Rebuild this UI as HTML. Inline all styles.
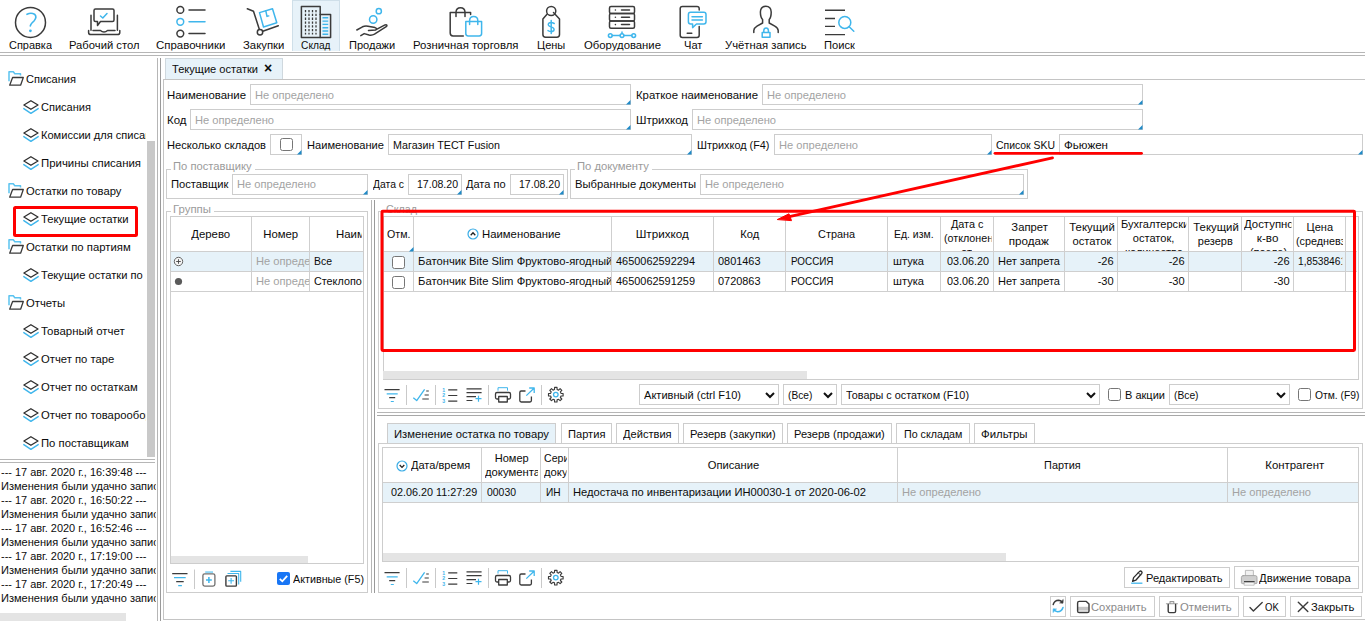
<!DOCTYPE html>
<html lang="ru"><head><meta charset="utf-8"><title>Текущие остатки</title>
<style>
html,body{margin:0;padding:0;background:#fff;overflow:hidden;}
body{width:1365px;height:621px;position:relative;overflow:hidden;font-family:"Liberation Sans", sans-serif;font-size:12px;color:#0c0c0c;}
body>div,body>span,body>svg{position:absolute;}
span{white-space:pre;display:block;}
svg{overflow:visible;}
</style></head>
<body>
<div style="left:292px;top:0px;width:48px;height:51px;background:#e7f2f9;border:1px solid #cfdfe9;box-sizing:border-box;border-bottom:none;"></div>
<span style="left:8.5px;top:38.57px;font-size:11.5px;line-height:13.5px;color:#0c0c0c;transform:scaleX(0.9529);transform-origin:0 0;clip-path:inset(0 0 1.5700000000000003px 0);">Справка</span>
<span style="left:68.5px;top:38.57px;font-size:11.5px;line-height:13.5px;color:#0c0c0c;transform:scaleX(0.9764);transform-origin:0 0;clip-path:inset(0 0 1.5700000000000003px 0);">Рабочий стол</span>
<span style="left:155.7px;top:38.57px;font-size:11.5px;line-height:13.5px;color:#0c0c0c;transform:scaleX(0.9947);transform-origin:0 0;clip-path:inset(0 0 1.5700000000000003px 0);">Справочники</span>
<span style="left:242.7px;top:38.57px;font-size:11.5px;line-height:13.5px;color:#0c0c0c;transform:scaleX(0.9848);transform-origin:0 0;clip-path:inset(0 0 1.5700000000000003px 0);">Закупки</span>
<span style="left:301px;top:38.57px;font-size:11.5px;line-height:13.5px;color:#0c0c0c;transform:scaleX(0.889);transform-origin:0 0;clip-path:inset(0 0 1.5700000000000003px 0);">Склад</span>
<span style="left:348.8px;top:38.57px;font-size:11.5px;line-height:13.5px;color:#0c0c0c;transform:scaleX(0.9619);transform-origin:0 0;clip-path:inset(0 0 1.5700000000000003px 0);">Продажи</span>
<span style="left:413px;top:38.57px;font-size:11.5px;line-height:13.5px;color:#0c0c0c;transform:scaleX(0.9887);transform-origin:0 0;clip-path:inset(0 0 1.5700000000000003px 0);">Розничная торговля</span>
<span style="left:537px;top:38.57px;font-size:11.5px;line-height:13.5px;color:#0c0c0c;transform:scaleX(0.9583);transform-origin:0 0;clip-path:inset(0 0 1.5700000000000003px 0);">Цены</span>
<span style="left:583.5px;top:38.57px;font-size:11.5px;line-height:13.5px;color:#0c0c0c;transform:scaleX(0.9844);transform-origin:0 0;clip-path:inset(0 0 1.5700000000000003px 0);">Оборудование</span>
<span style="left:684px;top:38.57px;font-size:11.5px;line-height:13.5px;color:#0c0c0c;transform:scaleX(0.9645);transform-origin:0 0;clip-path:inset(0 0 1.5700000000000003px 0);">Чат</span>
<span style="left:725.2px;top:38.57px;font-size:11.5px;line-height:13.5px;color:#0c0c0c;transform:scaleX(0.9807);transform-origin:0 0;clip-path:inset(0 0 1.5700000000000003px 0);">Учётная запись</span>
<span style="left:823.7px;top:38.57px;font-size:11.5px;line-height:13.5px;color:#0c0c0c;transform:scaleX(0.9694);transform-origin:0 0;clip-path:inset(0 0 1.5700000000000003px 0);">Поиск</span>
<div style="left:0px;top:51px;width:1365px;height:1px;background:#fff;"></div>
<div style="left:0px;top:52px;width:1365px;height:1px;background:#b6b6b6;"></div>
<div style="left:0px;top:55px;width:1365px;height:1px;background:#b6b6b6;"></div>
<span style="left:26.3px;top:72.77px;font-size:11.5px;line-height:13.5px;color:#0c0c0c;transform:scaleX(0.9595);transform-origin:0 0;width:124.75px;overflow:hidden;">Списания</span>
<span style="left:41.2px;top:100.77px;font-size:11.5px;line-height:13.5px;color:#0c0c0c;transform:scaleX(0.9595);transform-origin:0 0;width:109.22px;overflow:hidden;">Списания</span>
<span style="left:41.2px;top:128.77px;font-size:11.5px;line-height:13.5px;color:#0c0c0c;transform:scaleX(0.9618);transform-origin:0 0;width:108.96px;overflow:hidden;">Комиссии для списания</span>
<span style="left:41.2px;top:156.77px;font-size:11.5px;line-height:13.5px;color:#0c0c0c;transform:scaleX(0.9913);transform-origin:0 0;width:105.72px;overflow:hidden;">Причины списания</span>
<span style="left:26.3px;top:184.77px;font-size:11.5px;line-height:13.5px;color:#0c0c0c;transform:scaleX(0.9771);transform-origin:0 0;width:122.51px;overflow:hidden;">Остатки по товару</span>
<span style="left:41.2px;top:212.77px;font-size:11.5px;line-height:13.5px;color:#0c0c0c;transform:scaleX(0.9808);transform-origin:0 0;width:106.85px;overflow:hidden;">Текущие остатки</span>
<span style="left:26.3px;top:240.77px;font-size:11.5px;line-height:13.5px;color:#0c0c0c;transform:scaleX(0.9848);transform-origin:0 0;width:121.55px;overflow:hidden;">Остатки по партиям</span>
<span style="left:41.2px;top:268.77px;font-size:11.5px;line-height:13.5px;color:#0c0c0c;transform:scaleX(0.9678);transform-origin:0 0;width:108.29px;overflow:hidden;">Текущие остатки по партиям</span>
<span style="left:26.3px;top:296.77px;font-size:11.5px;line-height:13.5px;color:#0c0c0c;transform:scaleX(0.9807);transform-origin:0 0;width:122.06px;overflow:hidden;">Отчеты</span>
<span style="left:41.2px;top:324.77px;font-size:11.5px;line-height:13.5px;color:#0c0c0c;transform:scaleX(0.995);transform-origin:0 0;width:105.33px;overflow:hidden;">Товарный отчет</span>
<span style="left:41.2px;top:352.77px;font-size:11.5px;line-height:13.5px;color:#0c0c0c;transform:scaleX(0.9782);transform-origin:0 0;width:107.14px;overflow:hidden;">Отчет по таре</span>
<span style="left:41.2px;top:380.77px;font-size:11.5px;line-height:13.5px;color:#0c0c0c;transform:scaleX(0.9789);transform-origin:0 0;width:107.06px;overflow:hidden;">Отчет по остаткам</span>
<span style="left:41.2px;top:408.77px;font-size:11.5px;line-height:13.5px;color:#0c0c0c;transform:scaleX(0.9795);transform-origin:0 0;width:106.99px;overflow:hidden;">Отчет по товарообороту</span>
<span style="left:41.2px;top:436.77px;font-size:11.5px;line-height:13.5px;color:#0c0c0c;transform:scaleX(0.9814);transform-origin:0 0;width:106.79px;overflow:hidden;">По поставщикам</span>
<div style="left:147px;top:141px;width:8px;height:316px;background:#c9c9c9;"></div>
<div style="left:0px;top:459px;width:155px;height:1px;background:#b6b6b6;"></div>
<div style="left:0px;top:462px;width:155px;height:1px;background:#b6b6b6;"></div>
<div style="left:157px;top:58px;width:1px;height:563px;background:#b6b6b6;"></div>
<div style="left:160px;top:58px;width:1px;height:563px;background:#9a9a9a;"></div>
<span style="left:0.5px;top:465.57px;font-size:11.5px;line-height:13.5px;color:#0c0c0c;transform:scaleX(0.9512);transform-origin:0 0;width:162.43px;overflow:hidden;">--- 17 авг. 2020 г., 16:39:48 ---</span>
<span style="left:0.5px;top:479.57px;font-size:11.5px;line-height:13.5px;color:#0c0c0c;transform:scaleX(0.9611);transform-origin:0 0;width:160.75px;overflow:hidden;">Изменения были удачно записаны</span>
<span style="left:0.5px;top:493.57px;font-size:11.5px;line-height:13.5px;color:#0c0c0c;transform:scaleX(0.9512);transform-origin:0 0;width:162.43px;overflow:hidden;">--- 17 авг. 2020 г., 16:50:22 ---</span>
<span style="left:0.5px;top:507.57px;font-size:11.5px;line-height:13.5px;color:#0c0c0c;transform:scaleX(0.9611);transform-origin:0 0;width:160.75px;overflow:hidden;">Изменения были удачно записаны</span>
<span style="left:0.5px;top:521.57px;font-size:11.5px;line-height:13.5px;color:#0c0c0c;transform:scaleX(0.9512);transform-origin:0 0;width:162.43px;overflow:hidden;">--- 17 авг. 2020 г., 16:52:46 ---</span>
<span style="left:0.5px;top:535.57px;font-size:11.5px;line-height:13.5px;color:#0c0c0c;transform:scaleX(0.9611);transform-origin:0 0;width:160.75px;overflow:hidden;">Изменения были удачно записаны</span>
<span style="left:0.5px;top:549.57px;font-size:11.5px;line-height:13.5px;color:#0c0c0c;transform:scaleX(0.9512);transform-origin:0 0;width:162.43px;overflow:hidden;">--- 17 авг. 2020 г., 17:19:00 ---</span>
<span style="left:0.5px;top:563.57px;font-size:11.5px;line-height:13.5px;color:#0c0c0c;transform:scaleX(0.9611);transform-origin:0 0;width:160.75px;overflow:hidden;">Изменения были удачно записаны</span>
<span style="left:0.5px;top:577.57px;font-size:11.5px;line-height:13.5px;color:#0c0c0c;transform:scaleX(0.9512);transform-origin:0 0;width:162.43px;overflow:hidden;">--- 17 авг. 2020 г., 17:20:49 ---</span>
<span style="left:0.5px;top:591.57px;font-size:11.5px;line-height:13.5px;color:#0c0c0c;transform:scaleX(0.9611);transform-origin:0 0;width:160.75px;overflow:hidden;">Изменения были удачно записаны</span>
<div style="left:0px;top:613px;width:126px;height:8px;background:#e4e4e4;"></div>
<div style="left:13px;top:206px;width:125px;height:31px;border:3px solid #ff0000;border-radius:2.5px;box-sizing:border-box;"></div>
<div style="left:165px;top:58px;width:118px;height:22px;background:#e7f2f9;border:1px solid #cfd8de;box-sizing:border-box;"></div>
<span style="left:172px;top:62.57px;font-size:11.5px;line-height:13.5px;color:#0c0c0c;transform:scaleX(0.9629);transform-origin:0 0;">Текущие остатки</span>
<span style="left:264px;top:60.45px;font-size:14px;line-height:16px;color:#0c0c0c;font-weight:700;">×</span>
<div style="left:163px;top:79px;width:1202px;height:541px;border:1px solid #c4c4c4;box-sizing:border-box;border-right:none;"></div>
<span style="left:167px;top:88.57px;font-size:11.5px;line-height:13.5px;color:#0c0c0c;transform:scaleX(0.9908);transform-origin:0 0;">Наименование</span>
<div style="left:250px;top:84px;width:381px;height:21px;background:#fff;border:1px solid #cdcdcd;box-sizing:border-box;"></div>
<svg style="left:625.5px;top:99.5px" width="4.5" height="4.5"><path d="M4.5 0V4.5H0Z" fill="#1f8ac8"/></svg>
<span style="left:255px;top:88.57px;font-size:11.5px;line-height:13.5px;color:#a3a3a3;transform:scaleX(0.9677);transform-origin:0 0;">Не определено</span>
<span style="left:635.6px;top:88.57px;font-size:11.5px;line-height:13.5px;color:#0c0c0c;transform:scaleX(0.9885);transform-origin:0 0;">Краткое наименование</span>
<div style="left:762px;top:84px;width:381px;height:21px;background:#fff;border:1px solid #cdcdcd;box-sizing:border-box;"></div>
<svg style="left:1137.5px;top:99.5px" width="4.5" height="4.5"><path d="M4.5 0V4.5H0Z" fill="#1f8ac8"/></svg>
<span style="left:767px;top:88.57px;font-size:11.5px;line-height:13.5px;color:#a3a3a3;transform:scaleX(0.9677);transform-origin:0 0;">Не определено</span>
<span style="left:167px;top:113.57px;font-size:11.5px;line-height:13.5px;color:#0c0c0c;transform:scaleX(0.9968);transform-origin:0 0;">Код</span>
<div style="left:190px;top:109px;width:441px;height:21px;background:#fff;border:1px solid #cdcdcd;box-sizing:border-box;"></div>
<svg style="left:625.5px;top:124.5px" width="4.5" height="4.5"><path d="M4.5 0V4.5H0Z" fill="#1f8ac8"/></svg>
<span style="left:195px;top:113.57px;font-size:11.5px;line-height:13.5px;color:#a3a3a3;transform:scaleX(0.9677);transform-origin:0 0;">Не определено</span>
<span style="left:635.6px;top:113.57px;font-size:11.5px;line-height:13.5px;color:#0c0c0c;transform:scaleX(0.9925);transform-origin:0 0;">Штрихкод</span>
<div style="left:692px;top:109px;width:451px;height:21px;background:#fff;border:1px solid #cdcdcd;box-sizing:border-box;"></div>
<svg style="left:1137.5px;top:124.5px" width="4.5" height="4.5"><path d="M4.5 0V4.5H0Z" fill="#1f8ac8"/></svg>
<span style="left:697px;top:113.57px;font-size:11.5px;line-height:13.5px;color:#a3a3a3;transform:scaleX(0.9677);transform-origin:0 0;">Не определено</span>
<span style="left:167px;top:138.57px;font-size:11.5px;line-height:13.5px;color:#0c0c0c;transform:scaleX(0.9663);transform-origin:0 0;">Несколько складов</span>
<div style="left:270px;top:134px;width:32px;height:21px;background:#fff;border:1px solid #cdcdcd;box-sizing:border-box;"></div>
<svg style="left:296.5px;top:149.5px" width="4.5" height="4.5"><path d="M4.5 0V4.5H0Z" fill="#1f8ac8"/></svg>
<div style="left:280px;top:138px;width:13px;height:13px;background:#fff;border:1px solid #767676;box-sizing:border-box;border-radius:2.5px;"></div>
<span style="left:307px;top:138.57px;font-size:11.5px;line-height:13.5px;color:#0c0c0c;transform:scaleX(0.9657);transform-origin:0 0;">Наименование</span>
<div style="left:388px;top:134px;width:304px;height:21px;background:#fff;border:1px solid #cdcdcd;box-sizing:border-box;"></div>
<svg style="left:686.5px;top:149.5px" width="4.5" height="4.5"><path d="M4.5 0V4.5H0Z" fill="#1f8ac8"/></svg>
<span style="left:393px;top:138.57px;font-size:11.5px;line-height:13.5px;color:#0c0c0c;transform:scaleX(0.9311);transform-origin:0 0;">Магазин ТЕСТ Fusion</span>
<span style="left:696.8px;top:138.57px;font-size:11.5px;line-height:13.5px;color:#0c0c0c;transform:scaleX(0.9456);transform-origin:0 0;">Штрихкод (F4)</span>
<div style="left:774px;top:134px;width:218px;height:21px;background:#fff;border:1px solid #cdcdcd;box-sizing:border-box;"></div>
<svg style="left:986.5px;top:149.5px" width="4.5" height="4.5"><path d="M4.5 0V4.5H0Z" fill="#1f8ac8"/></svg>
<span style="left:779px;top:138.57px;font-size:11.5px;line-height:13.5px;color:#a3a3a3;transform:scaleX(0.9677);transform-origin:0 0;">Не определено</span>
<span style="left:995.5px;top:138.57px;font-size:11.5px;line-height:13.5px;color:#0c0c0c;transform:scaleX(0.9062);transform-origin:0 0;">Список SKU</span>
<div style="left:1059px;top:134px;width:304px;height:21px;background:#fff;border:1px solid #cdcdcd;box-sizing:border-box;"></div>
<svg style="left:1357.5px;top:149.5px" width="4.5" height="4.5"><path d="M4.5 0V4.5H0Z" fill="#1f8ac8"/></svg>
<span style="left:1064px;top:138.57px;font-size:11.5px;line-height:13.5px;color:#0c0c0c;transform:scaleX(1.0075);transform-origin:0 0;">Фьюжен</span>
<div style="left:166px;top:169px;width:402px;height:30px;border:1px solid #cdcdcd;box-sizing:border-box;"></div>
<div style="left:171px;top:169px;width:83.5px;height:1px;background:#fff;"></div>
<span style="left:173px;top:160.37px;font-size:11.5px;line-height:13.5px;color:#9b9b9b;transform:scaleX(0.9731);transform-origin:0 0;">По поставщику</span>
<span style="left:170.6px;top:177.57px;font-size:11.5px;line-height:13.5px;color:#0c0c0c;transform:scaleX(0.9731);transform-origin:0 0;">Поставщик</span>
<div style="left:232px;top:174px;width:136px;height:21px;background:#fff;border:1px solid #cdcdcd;box-sizing:border-box;"></div>
<svg style="left:362.5px;top:189.5px" width="4.5" height="4.5"><path d="M4.5 0V4.5H0Z" fill="#1f8ac8"/></svg>
<span style="left:237px;top:177.57px;font-size:11.5px;line-height:13.5px;color:#a3a3a3;transform:scaleX(0.9677);transform-origin:0 0;">Не определено</span>
<span style="left:373px;top:177.57px;font-size:11.5px;line-height:13.5px;color:#0c0c0c;transform:scaleX(0.9006);transform-origin:0 0;">Дата с</span>
<div style="left:408px;top:174px;width:54px;height:21px;background:#fff;border:1px solid #cdcdcd;box-sizing:border-box;"></div>
<svg style="left:456.5px;top:189.5px" width="4.5" height="4.5"><path d="M4.5 0V4.5H0Z" fill="#1f8ac8"/></svg>
<span style="left:417.3px;top:177.57px;font-size:11.5px;line-height:13.5px;color:#0c0c0c;transform:scaleX(0.9159);transform-origin:0 0;">17.08.20</span>
<span style="left:466.4px;top:177.57px;font-size:11.5px;line-height:13.5px;color:#0c0c0c;transform:scaleX(0.9589);transform-origin:0 0;">Дата по</span>
<div style="left:510px;top:174px;width:54px;height:21px;background:#fff;border:1px solid #cdcdcd;box-sizing:border-box;"></div>
<svg style="left:558.5px;top:189.5px" width="4.5" height="4.5"><path d="M4.5 0V4.5H0Z" fill="#1f8ac8"/></svg>
<span style="left:518.7px;top:177.57px;font-size:11.5px;line-height:13.5px;color:#0c0c0c;transform:scaleX(0.9159);transform-origin:0 0;">17.08.20</span>
<div style="left:570px;top:169px;width:458px;height:30px;border:1px solid #cdcdcd;box-sizing:border-box;"></div>
<div style="left:575px;top:169px;width:77px;height:1px;background:#fff;"></div>
<span style="left:577px;top:160.37px;font-size:11.5px;line-height:13.5px;color:#9b9b9b;transform:scaleX(0.979);transform-origin:0 0;">По документу</span>
<span style="left:574.5px;top:177.57px;font-size:11.5px;line-height:13.5px;color:#0c0c0c;transform:scaleX(0.9762);transform-origin:0 0;">Выбранные документы</span>
<div style="left:700px;top:174px;width:324px;height:21px;background:#fff;border:1px solid #cdcdcd;box-sizing:border-box;"></div>
<svg style="left:1018.5px;top:189.5px" width="4.5" height="4.5"><path d="M4.5 0V4.5H0Z" fill="#1f8ac8"/></svg>
<span style="left:705px;top:177.57px;font-size:11.5px;line-height:13.5px;color:#a3a3a3;transform:scaleX(0.9677);transform-origin:0 0;">Не определено</span>
<div style="left:371px;top:200px;width:1px;height:393px;background:#b6b6b6;"></div>
<div style="left:374px;top:200px;width:1px;height:393px;background:#9a9a9a;"></div>
<div style="left:166px;top:211px;width:202px;height:382px;border:1px solid #cdcdcd;box-sizing:border-box;"></div>
<div style="left:171px;top:211px;width:43px;height:1px;background:#fff;"></div>
<span style="left:173px;top:203.37px;font-size:11.5px;line-height:13.5px;color:#9b9b9b;transform:scaleX(0.9914);transform-origin:0 0;">Группы</span>
<div style="left:170px;top:216px;width:194px;height:348px;background:#fff;border:1px solid #cdcdcd;box-sizing:border-box;"></div>
<div style="left:171px;top:252px;width:192px;height:19px;background:#e6f2f9;"></div>
<div style="left:171px;top:251px;width:192px;height:1px;background:#cfcfcf;"></div>
<div style="left:171px;top:271px;width:192px;height:1px;background:#cfcfcf;"></div>
<div style="left:171px;top:291px;width:192px;height:1px;background:#cfcfcf;"></div>
<div style="left:251px;top:217px;width:1px;height:75px;background:#cfcfcf;"></div>
<div style="left:309px;top:217px;width:1px;height:75px;background:#cfcfcf;"></div>
<span style="left:190.82px;top:227.57px;font-size:11.5px;line-height:13.5px;color:#0c0c0c;transform:scaleX(0.9909);transform-origin:50% 0;">Дерево</span>
<span style="left:262.8px;top:227.57px;font-size:11.5px;line-height:13.5px;color:#0c0c0c;transform:scaleX(0.9885);transform-origin:50% 0;">Номер</span>
<span style="left:336.3px;top:227.57px;font-size:11.5px;line-height:13.5px;color:#0c0c0c;transform:scaleX(0.9908);transform-origin:0 0;width:26.24px;overflow:hidden;">Наименование</span>
<span style="left:256px;top:254.57px;font-size:11.5px;line-height:13.5px;color:#a3a3a3;transform:scaleX(0.9677);transform-origin:0 0;width:54.77px;overflow:hidden;">Не определено</span>
<span style="left:256px;top:274.57px;font-size:11.5px;line-height:13.5px;color:#a3a3a3;transform:scaleX(0.9677);transform-origin:0 0;width:54.77px;overflow:hidden;">Не определено</span>
<span style="left:314px;top:254.57px;font-size:11.5px;line-height:13.5px;color:#0c0c0c;transform:scaleX(0.9078);transform-origin:0 0;">Все</span>
<span style="left:314.3px;top:274.57px;font-size:11.5px;line-height:13.5px;color:#0c0c0c;transform:scaleX(0.9388);transform-origin:0 0;width:51.13px;overflow:hidden;">Стеклопосуда</span>
<svg style="left:173px;top:256px" width="11" height="11" viewBox="0 0 11 11"><circle cx="5.5" cy="5.5" r="4.2" fill="#f4f4f4" stroke="#555" stroke-width="0.9"/><path d="M3.2 5.5H7.8M5.5 3.2V7.8" stroke="#444" stroke-width="0.9"/></svg>
<svg style="left:174px;top:277px" width="9" height="9" viewBox="0 0 9 9"><circle cx="4.5" cy="4.5" r="3.6" fill="#5a5a5a"/></svg>
<div style="left:171px;top:556px;width:137px;height:7px;background:#e4e4e4;"></div>
<svg style="left:277px;top:572px" width="13" height="13" viewBox="0 0 13 13"><rect x="0" y="0" width="13" height="13" rx="2" fill="#1976f5"/><path d="M2.8 6.8L5.3 9.3L10.2 3.8" fill="none" stroke="#fff" stroke-width="1.8"/></svg>
<span style="left:293px;top:572.57px;font-size:11.5px;line-height:13.5px;color:#0c0c0c;transform:scaleX(0.9352);transform-origin:0 0;">Активные (F5)</span>
<div style="left:378px;top:211px;width:985px;height:198px;border:1px solid #cdcdcd;box-sizing:border-box;"></div>
<div style="left:383.5px;top:211px;width:36px;height:1px;background:#fff;"></div>
<span style="left:385.5px;top:203.37px;font-size:11.5px;line-height:13.5px;color:#9b9b9b;transform:scaleX(0.931);transform-origin:0 0;">Склад</span>
<div style="left:383px;top:216px;width:976px;height:164px;background:#fff;border:1px solid #cdcdcd;box-sizing:border-box;"></div>
<div style="left:384px;top:252px;width:973px;height:19px;background:#e6f2f9;"></div>
<div style="left:384px;top:251px;width:973px;height:1px;background:#cfcfcf;"></div>
<div style="left:384px;top:271px;width:973px;height:1px;background:#cfcfcf;"></div>
<div style="left:384px;top:291px;width:973px;height:1px;background:#cfcfcf;"></div>
<div style="left:413px;top:217px;width:1px;height:75px;background:#cfcfcf;"></div>
<div style="left:611px;top:217px;width:1px;height:75px;background:#cfcfcf;"></div>
<div style="left:713px;top:217px;width:1px;height:75px;background:#cfcfcf;"></div>
<div style="left:785px;top:217px;width:1px;height:75px;background:#cfcfcf;"></div>
<div style="left:887px;top:217px;width:1px;height:75px;background:#cfcfcf;"></div>
<div style="left:940px;top:217px;width:1px;height:75px;background:#cfcfcf;"></div>
<div style="left:993px;top:217px;width:1px;height:75px;background:#cfcfcf;"></div>
<div style="left:1064px;top:217px;width:1px;height:75px;background:#cfcfcf;"></div>
<div style="left:1117px;top:217px;width:1px;height:75px;background:#cfcfcf;"></div>
<div style="left:1188px;top:217px;width:1px;height:75px;background:#cfcfcf;"></div>
<div style="left:1241px;top:217px;width:1px;height:75px;background:#cfcfcf;"></div>
<div style="left:1293px;top:217px;width:1px;height:75px;background:#cfcfcf;"></div>
<div style="left:1345px;top:217px;width:1px;height:75px;background:#cfcfcf;"></div>
<svg style="left:408.5px;top:246.5px" width="4.5" height="4.5"><path d="M4.5 0V4.5H0Z" fill="#1f8ac8"/></svg>
<span style="left:386.8px;top:227.57px;font-size:11.5px;line-height:13.5px;color:#0c0c0c;transform:scaleX(0.9239);transform-origin:0 0;">Отм.</span>
<span style="left:481.6px;top:227.57px;font-size:11.5px;line-height:13.5px;color:#0c0c0c;transform:scaleX(0.9858);transform-origin:0 0;">Наименование</span>
<span style="left:636.3px;top:227.57px;font-size:11.5px;line-height:13.5px;color:#0c0c0c;transform:scaleX(1.0116);transform-origin:50% 0;">Штрихкод</span>
<span style="left:740.22px;top:227.57px;font-size:11.5px;line-height:13.5px;color:#0c0c0c;transform:scaleX(0.9712);transform-origin:50% 0;">Код</span>
<span style="left:816.94px;top:227.57px;font-size:11.5px;line-height:13.5px;color:#0c0c0c;transform:scaleX(0.9457);transform-origin:50% 0;">Страна</span>
<span style="left:892.21px;top:227.57px;font-size:11.5px;line-height:13.5px;color:#0c0c0c;transform:scaleX(0.9064);transform-origin:50% 0;">Ед. изм.</span>
<span style="left:949.79px;top:217.57px;font-size:11.5px;line-height:13.5px;color:#0c0c0c;transform:scaleX(0.9442);transform-origin:50% 0;">Дата с</span>
<span style="left:943.7px;top:231.57px;font-size:11.5px;line-height:13.5px;color:#0c0c0c;transform:scaleX(0.9304);transform-origin:0 0;width:50.84px;overflow:hidden;">(отклонение</span>
<span style="left:961px;top:245.57px;font-size:11.5px;line-height:13.5px;color:#0c0c0c;transform:scaleX(0.9631);transform-origin:0 0;clip-path:inset(0 0 8.069999999999993px 0);">от</span>
<span style="left:1010.88px;top:220.57px;font-size:11.5px;line-height:13.5px;color:#0c0c0c;transform:scaleX(0.9799);transform-origin:50% 0;">Запрет</span>
<span style="left:1009.21px;top:234.57px;font-size:11.5px;line-height:13.5px;color:#0c0c0c;transform:scaleX(1.0107);transform-origin:50% 0;">продаж</span>
<span style="left:1068.5px;top:220.57px;font-size:11.5px;line-height:13.5px;color:#0c0c0c;transform:scaleX(0.9891);transform-origin:50% 0;">Текущий</span>
<span style="left:1071.5px;top:234.57px;font-size:11.5px;line-height:13.5px;color:#0c0c0c;transform:scaleX(0.975);transform-origin:50% 0;">остаток</span>
<span style="left:1120.7px;top:217.57px;font-size:11.5px;line-height:13.5px;color:#0c0c0c;transform:scaleX(0.9599);transform-origin:0 0;width:67.82px;overflow:hidden;">Бухгалтерский</span>
<span style="left:1131.91px;top:231.57px;font-size:11.5px;line-height:13.5px;color:#0c0c0c;transform:scaleX(0.9609);transform-origin:50% 0;">остаток,</span>
<span style="left:1124.5px;top:245.57px;font-size:11.5px;line-height:13.5px;color:#0c0c0c;transform:scaleX(0.9632);transform-origin:0 0;clip-path:inset(0 0 8.069999999999993px 0);">количество</span>
<span style="left:1192.5px;top:220.57px;font-size:11.5px;line-height:13.5px;color:#0c0c0c;transform:scaleX(0.9891);transform-origin:50% 0;">Текущий</span>
<span style="left:1197.2px;top:234.57px;font-size:11.5px;line-height:13.5px;color:#0c0c0c;transform:scaleX(0.9564);transform-origin:50% 0;">резерв</span>
<span style="left:1244px;top:217.57px;font-size:11.5px;line-height:13.5px;color:#0c0c0c;transform:scaleX(0.9895);transform-origin:0 0;width:47.8px;overflow:hidden;">Доступное</span>
<span style="left:1257.38px;top:231.57px;font-size:11.5px;line-height:13.5px;color:#0c0c0c;transform:scaleX(1.0118);transform-origin:50% 0;">к-во</span>
<span style="left:1250px;top:245.57px;font-size:11.5px;line-height:13.5px;color:#0c0c0c;transform:scaleX(0.9453);transform-origin:0 0;clip-path:inset(0 0 8.069999999999993px 0);">(после)</span>
<span style="left:1305.67px;top:220.57px;font-size:11.5px;line-height:13.5px;color:#0c0c0c;transform:scaleX(0.9582);transform-origin:50% 0;">Цена</span>
<span style="left:1296.1px;top:234.57px;font-size:11.5px;line-height:13.5px;color:#0c0c0c;transform:scaleX(0.9365);transform-origin:0 0;width:50.08px;overflow:hidden;">(средневзвешенная)</span>
<div style="left:392px;top:256px;width:13px;height:13px;box-sizing:border-box;border:1px solid #767676;border-radius:2.5px;background:#fff"></div>
<span style="left:418.2px;top:254.57px;font-size:11.5px;line-height:13.5px;color:#0c0c0c;transform:scaleX(0.9786);transform-origin:0 0;width:197.02px;overflow:hidden;">Батончик Bite Slim Фруктово-ягодный 30г</span>
<span style="left:616px;top:254.57px;font-size:11.5px;line-height:13.5px;color:#0c0c0c;transform:scaleX(0.95);transform-origin:0 0;">4650062592294</span>
<span style="left:718px;top:254.57px;font-size:11.5px;line-height:13.5px;color:#0c0c0c;transform:scaleX(0.9491);transform-origin:0 0;">0801463</span>
<span style="left:790.5px;top:254.57px;font-size:11.5px;line-height:13.5px;color:#0c0c0c;transform:scaleX(0.8578);transform-origin:0 0;">РОССИЯ</span>
<span style="left:892.5px;top:254.57px;font-size:11.5px;line-height:13.5px;color:#0c0c0c;transform:scaleX(0.9669);transform-origin:0 0;">штука</span>
<span style="left:947.3px;top:254.57px;font-size:11.5px;line-height:13.5px;color:#0c0c0c;transform:scaleX(0.9382);transform-origin:0 0;">03.06.20</span>
<span style="left:998px;top:254.57px;font-size:11.5px;line-height:13.5px;color:#0c0c0c;transform:scaleX(0.9594);transform-origin:0 0;">Нет запрета</span>
<span style="left:1096.97px;top:254.57px;font-size:11.5px;line-height:13.5px;color:#0c0c0c;transform:scaleX(0.9624);transform-origin:100% 0;">-26</span>
<span style="left:1167.58px;top:254.57px;font-size:11.5px;line-height:13.5px;color:#0c0c0c;transform:scaleX(0.9624);transform-origin:100% 0;">-26</span>
<span style="left:1272.78px;top:254.57px;font-size:11.5px;line-height:13.5px;color:#0c0c0c;transform:scaleX(0.9624);transform-origin:100% 0;">-26</span>
<span style="left:1298.4px;top:254.57px;font-size:11.5px;line-height:13.5px;color:#0c0c0c;transform:scaleX(0.8845);transform-origin:0 0;width:50.42px;overflow:hidden;">1,853846153</span>
<div style="left:392px;top:276px;width:13px;height:13px;box-sizing:border-box;border:1px solid #767676;border-radius:2.5px;background:#fff"></div>
<span style="left:418.2px;top:274.57px;font-size:11.5px;line-height:13.5px;color:#0c0c0c;transform:scaleX(0.9786);transform-origin:0 0;width:197.02px;overflow:hidden;">Батончик Bite Slim Фруктово-ягодный 30г</span>
<span style="left:616px;top:274.57px;font-size:11.5px;line-height:13.5px;color:#0c0c0c;transform:scaleX(0.95);transform-origin:0 0;">4650062591259</span>
<span style="left:718px;top:274.57px;font-size:11.5px;line-height:13.5px;color:#0c0c0c;transform:scaleX(0.9491);transform-origin:0 0;">0720863</span>
<span style="left:790.5px;top:274.57px;font-size:11.5px;line-height:13.5px;color:#0c0c0c;transform:scaleX(0.8578);transform-origin:0 0;">РОССИЯ</span>
<span style="left:892.5px;top:274.57px;font-size:11.5px;line-height:13.5px;color:#0c0c0c;transform:scaleX(0.9669);transform-origin:0 0;">штука</span>
<span style="left:947.3px;top:274.57px;font-size:11.5px;line-height:13.5px;color:#0c0c0c;transform:scaleX(0.9382);transform-origin:0 0;">03.06.20</span>
<span style="left:998px;top:274.57px;font-size:11.5px;line-height:13.5px;color:#0c0c0c;transform:scaleX(0.9594);transform-origin:0 0;">Нет запрета</span>
<span style="left:1096.97px;top:274.57px;font-size:11.5px;line-height:13.5px;color:#0c0c0c;transform:scaleX(0.9624);transform-origin:100% 0;">-30</span>
<span style="left:1167.58px;top:274.57px;font-size:11.5px;line-height:13.5px;color:#0c0c0c;transform:scaleX(0.9624);transform-origin:100% 0;">-30</span>
<span style="left:1272.78px;top:274.57px;font-size:11.5px;line-height:13.5px;color:#0c0c0c;transform:scaleX(0.9624);transform-origin:100% 0;">-30</span>
<svg style="left:466.9px;top:228.2px" width="12" height="12" viewBox="0 0 12 12"><circle cx="6" cy="6" r="5" fill="none" stroke="#39ace6" stroke-width="1.2"/><path d="M3.7 7.2L6 4.8L8.3 7.2" fill="none" stroke="#222" stroke-width="1.3"/></svg>
<div style="left:383px;top:371px;width:424px;height:8px;background:#e4e4e4;"></div>
<div style="left:639px;top:384px;width:140px;height:21px;background:#fff;border:1px solid #cdcdcd;box-sizing:border-box;"></div>
<span style="left:644px;top:388.57px;font-size:11.5px;line-height:13.5px;color:#0c0c0c;transform:scaleX(0.9616);transform-origin:0 0;">Активный (ctrl F10)</span>
<svg style="left:764.5px;top:391.5px" width="10" height="7" viewBox="0 0 10 7"><path d="M1 1L5 5L9 1" fill="none" stroke="#111" stroke-width="2"/></svg>
<div style="left:783px;top:384px;width:54px;height:21px;background:#fff;border:1px solid #cdcdcd;box-sizing:border-box;"></div>
<span style="left:788px;top:388.57px;font-size:11.5px;line-height:13.5px;color:#0c0c0c;transform:scaleX(0.8841);transform-origin:0 0;">(Все)</span>
<svg style="left:822.5px;top:391.5px" width="10" height="7" viewBox="0 0 10 7"><path d="M1 1L5 5L9 1" fill="none" stroke="#111" stroke-width="2"/></svg>
<div style="left:841px;top:384px;width:259px;height:21px;background:#fff;border:1px solid #cdcdcd;box-sizing:border-box;"></div>
<span style="left:846px;top:388.57px;font-size:11.5px;line-height:13.5px;color:#0c0c0c;transform:scaleX(0.9423);transform-origin:0 0;">Товары с остатком (F10)</span>
<svg style="left:1085.5px;top:391.5px" width="10" height="7" viewBox="0 0 10 7"><path d="M1 1L5 5L9 1" fill="none" stroke="#111" stroke-width="2"/></svg>
<div style="left:1108px;top:388px;width:13px;height:13px;box-sizing:border-box;border:1px solid #767676;border-radius:2.5px;background:#fff"></div>
<span style="left:1124.8px;top:388.57px;font-size:11.5px;line-height:13.5px;color:#0c0c0c;transform:scaleX(0.9584);transform-origin:0 0;">В акции</span>
<div style="left:1169px;top:384px;width:121px;height:21px;background:#fff;border:1px solid #cdcdcd;box-sizing:border-box;"></div>
<span style="left:1174px;top:388.57px;font-size:11.5px;line-height:13.5px;color:#0c0c0c;transform:scaleX(0.8914);transform-origin:0 0;">(Все)</span>
<svg style="left:1275.5px;top:391.5px" width="10" height="7" viewBox="0 0 10 7"><path d="M1 1L5 5L9 1" fill="none" stroke="#111" stroke-width="2"/></svg>
<div style="left:1298px;top:388px;width:13px;height:13px;box-sizing:border-box;border:1px solid #767676;border-radius:2.5px;background:#fff"></div>
<span style="left:1314.7px;top:388.57px;font-size:11.5px;line-height:13.5px;color:#0c0c0c;transform:scaleX(0.8973);transform-origin:0 0;">Отм. (F9)</span>
<div style="left:377px;top:412px;width:988px;height:1px;background:#b6b6b6;"></div>
<div style="left:377px;top:415px;width:988px;height:1px;background:#a8a8a8;"></div>
<div style="left:378px;top:443px;width:985px;height:150px;background:#fff;border:1px solid #cdcdcd;box-sizing:border-box;"></div>
<div style="left:387px;top:423px;width:169px;height:21px;background:#e6f2f9;border:1px solid #cdcdcd;box-sizing:border-box;"></div>
<span style="left:394.4px;top:427.57px;font-size:11.5px;line-height:13.5px;color:#0c0c0c;transform:scaleX(0.9794);transform-origin:0 0;">Изменение остатка по товару</span>
<div style="left:561px;top:423px;width:51px;height:21px;background:#fff;border:1px solid #cdcdcd;box-sizing:border-box;"></div>
<span style="left:568px;top:427.57px;font-size:11.5px;line-height:13.5px;color:#0c0c0c;transform:scaleX(0.9656);transform-origin:0 0;">Партия</span>
<div style="left:616px;top:423px;width:63px;height:21px;background:#fff;border:1px solid #cdcdcd;box-sizing:border-box;"></div>
<span style="left:622.8px;top:427.57px;font-size:11.5px;line-height:13.5px;color:#0c0c0c;transform:scaleX(0.9645);transform-origin:0 0;">Действия</span>
<div style="left:683px;top:423px;width:100px;height:21px;background:#fff;border:1px solid #cdcdcd;box-sizing:border-box;"></div>
<span style="left:690px;top:427.57px;font-size:11.5px;line-height:13.5px;color:#0c0c0c;transform:scaleX(0.9698);transform-origin:0 0;">Резерв (закупки)</span>
<div style="left:787px;top:423px;width:105px;height:21px;background:#fff;border:1px solid #cdcdcd;box-sizing:border-box;"></div>
<span style="left:794.4px;top:427.57px;font-size:11.5px;line-height:13.5px;color:#0c0c0c;transform:scaleX(0.9639);transform-origin:0 0;">Резерв (продажи)</span>
<div style="left:896px;top:423px;width:74px;height:21px;background:#fff;border:1px solid #cdcdcd;box-sizing:border-box;"></div>
<span style="left:903.9px;top:427.57px;font-size:11.5px;line-height:13.5px;color:#0c0c0c;transform:scaleX(0.9286);transform-origin:0 0;">По складам</span>
<div style="left:974px;top:423px;width:61px;height:21px;background:#fff;border:1px solid #cdcdcd;box-sizing:border-box;"></div>
<span style="left:981.2px;top:427.57px;font-size:11.5px;line-height:13.5px;color:#0c0c0c;transform:scaleX(0.9913);transform-origin:0 0;">Фильтры</span>
<div style="left:382px;top:447px;width:977px;height:115px;background:#fff;border:1px solid #cdcdcd;box-sizing:border-box;"></div>
<div style="left:383px;top:483px;width:975px;height:19px;background:#e6f2f9;"></div>
<div style="left:383px;top:482px;width:975px;height:1px;background:#cfcfcf;"></div>
<div style="left:383px;top:502px;width:975px;height:1px;background:#cfcfcf;"></div>
<div style="left:481px;top:448px;width:1px;height:55px;background:#cfcfcf;"></div>
<div style="left:540px;top:448px;width:1px;height:55px;background:#cfcfcf;"></div>
<div style="left:568px;top:448px;width:1px;height:55px;background:#cfcfcf;"></div>
<div style="left:897px;top:448px;width:1px;height:55px;background:#cfcfcf;"></div>
<div style="left:1227px;top:448px;width:1px;height:55px;background:#cfcfcf;"></div>
<svg style="left:396px;top:459.6px" width="12" height="12" viewBox="0 0 12 12"><circle cx="6" cy="6" r="5" fill="none" stroke="#39ace6" stroke-width="1.2"/><path d="M3.7 5L6 7.4L8.3 5" fill="none" stroke="#222" stroke-width="1.3"/></svg>
<span style="left:410.6px;top:458.57px;font-size:11.5px;line-height:13.5px;color:#0c0c0c;transform:scaleX(0.9594);transform-origin:0 0;">Дата/время</span>
<span style="left:493.8px;top:451.57px;font-size:11.5px;line-height:13.5px;color:#0c0c0c;transform:scaleX(0.9603);transform-origin:50% 0;">Номер</span>
<span style="left:484.8px;top:465.57px;font-size:11.5px;line-height:13.5px;color:#0c0c0c;transform:scaleX(0.9808);transform-origin:0 0;width:54.45px;overflow:hidden;">документа</span>
<span style="left:543.7px;top:451.57px;font-size:11.5px;line-height:13.5px;color:#0c0c0c;transform:scaleX(0.9185);transform-origin:0 0;width:24.61px;overflow:hidden;">Серия</span>
<span style="left:543.7px;top:465.57px;font-size:11.5px;line-height:13.5px;color:#0c0c0c;transform:scaleX(0.9808);transform-origin:0 0;width:23.04px;overflow:hidden;">документа</span>
<span style="left:706.54px;top:458.57px;font-size:11.5px;line-height:13.5px;color:#0c0c0c;transform:scaleX(0.9731);transform-origin:50% 0;">Описание</span>
<span style="left:1043.13px;top:458.57px;font-size:11.5px;line-height:13.5px;color:#0c0c0c;transform:scaleX(0.9423);transform-origin:50% 0;">Партия</span>
<span style="left:1264.77px;top:458.57px;font-size:11.5px;line-height:13.5px;color:#0c0c0c;transform:scaleX(0.9921);transform-origin:50% 0;">Контрагент</span>
<span style="left:390.5px;top:485.57px;font-size:11.5px;line-height:13.5px;color:#0c0c0c;transform:scaleX(0.9393);transform-origin:0 0;">02.06.20 11:27:29</span>
<span style="left:486.5px;top:485.57px;font-size:11.5px;line-height:13.5px;color:#0c0c0c;transform:scaleX(0.9067);transform-origin:0 0;">00030</span>
<span style="left:546.3px;top:485.57px;font-size:11.5px;line-height:13.5px;color:#0c0c0c;transform:scaleX(0.8807);transform-origin:0 0;">ИН</span>
<span style="left:573.3px;top:485.57px;font-size:11.5px;line-height:13.5px;color:#0c0c0c;transform:scaleX(0.9717);transform-origin:0 0;">Недостача по инвентаризации ИН00030-1 от 2020-06-02</span>
<span style="left:902.4px;top:485.57px;font-size:11.5px;line-height:13.5px;color:#a3a3a3;transform:scaleX(0.9677);transform-origin:0 0;">Не определено</span>
<span style="left:1232.4px;top:485.57px;font-size:11.5px;line-height:13.5px;color:#a3a3a3;transform:scaleX(0.9677);transform-origin:0 0;">Не определено</span>
<div style="left:383px;top:553px;width:623px;height:8px;background:#e4e4e4;"></div>
<div style="left:1124px;top:567px;width:106px;height:21px;background:#fff;border:1px solid #cdcdcd;box-sizing:border-box;"></div>
<span style="left:1146px;top:571.57px;font-size:11.5px;line-height:13.5px;color:#0c0c0c;transform:scaleX(0.9641);transform-origin:0 0;">Редактировать</span>
<div style="left:1234px;top:566px;width:125px;height:23px;background:#fff;border:1px solid #cdcdcd;box-sizing:border-box;"></div>
<span style="left:1259px;top:571.57px;font-size:11.5px;line-height:13.5px;color:#0c0c0c;transform:scaleX(0.9809);transform-origin:0 0;">Движение товара</span>
<div style="left:1050px;top:596px;width:16px;height:21px;background:#fff;border:1px solid #cdcdcd;box-sizing:border-box;"></div>
<div style="left:1070px;top:596px;width:85px;height:21px;background:#fff;border:1px solid #cdcdcd;box-sizing:border-box;"></div>
<span style="left:1091.2px;top:600.87px;font-size:11.5px;line-height:13.5px;color:#8a8a8a;transform:scaleX(0.971);transform-origin:0 0;">Сохранить</span>
<div style="left:1159px;top:596px;width:80px;height:21px;background:#fff;border:1px solid #cdcdcd;box-sizing:border-box;"></div>
<span style="left:1180px;top:600.87px;font-size:11.5px;line-height:13.5px;color:#8a8a8a;transform:scaleX(0.9836);transform-origin:0 0;">Отменить</span>
<div style="left:1243px;top:596px;width:43px;height:21px;background:#fff;border:1px solid #cdcdcd;box-sizing:border-box;"></div>
<span style="left:1265px;top:600.87px;font-size:11.5px;line-height:13.5px;color:#0c0c0c;transform:scaleX(0.8301);transform-origin:0 0;">OK</span>
<div style="left:1290px;top:596px;width:72px;height:21px;background:#fff;border:1px solid #cdcdcd;box-sizing:border-box;"></div>
<span style="left:1311px;top:600.87px;font-size:11.5px;line-height:13.5px;color:#0c0c0c;transform:scaleX(0.9775);transform-origin:0 0;">Закрыть</span>
<svg style="left:0;top:0;pointer-events:none" width="1365" height="621" viewBox="0 0 1365 621">
<g fill="none" stroke="#ff0000" stroke-width="3" stroke-linecap="round" stroke-linejoin="round">
<path d="M995 153.3H1141.5" stroke-width="2.8"/>
<path d="M1052.5 157.8L786 217.3" stroke-width="2.8"/>
<path d="M777.6 219.4L789 213.8L791.4 220.3Z" fill="#ff0000" stroke-width="1"/>
<rect x="382" y="211.3" width="972.5" height="139.1" rx="0.8" stroke-linejoin="miter"/>
</g></svg>
<svg style="left:0;top:0" width="900" height="40" viewBox="0 0 900 40" fill="none" stroke="#3b3b3b" stroke-width="1.5" stroke-linecap="round" stroke-linejoin="round">
<!-- help -->
<circle cx="30.5" cy="22.4" r="15"/>
<path d="M27 14.3Q31 12.3 34.5 14.2Q37.5 17 34 21Q30.5 24 30.3 26" stroke="#3fb6ec" stroke-width="1.6"/><circle cx="30.4" cy="30.8" r="1.4" fill="#3fb6ec" stroke="none"/>
<!-- desktop -->
<path d="M95.5 9H112.5Q114 9 114 10.5V20Q114 21.5 112.5 21.5H100.5L97.5 25.5V21.5H95.5Q94 21.5 94 20V10.5Q94 9 95.5 9Z"/>
<path d="M100.5 16L102.8 18L107 13.5" stroke="#3fb6ec"/>
<path d="M91 15.3V30.3M117.4 15.3V30.3M93 30.5H100.5Q102 32 104 32Q106 32 107.5 30.5H115"/>
<path d="M88.6 30.5V32.5Q88.6 34.6 91 34.6H117.4Q119.8 34.6 119.8 32.5V30.5"/>
<!-- references -->
<circle cx="180.3" cy="9.9" r="3.4"/><path d="M189 9.9H205"/>
<circle cx="180.3" cy="21.8" r="3.4" stroke="#3fb6ec"/><path d="M189 21.8H205" stroke="#3fb6ec"/>
<circle cx="180.3" cy="33.6" r="3.4"/><path d="M189 33.6H205"/>
<!-- purchases -->
<path d="M247.3 8.8L253.5 11.3L259.3 29.3"/><circle cx="260" cy="32.3" r="2.7"/><path d="M262.8 31.3L278.3 25.8"/>
<path d="M259.5 12.6L272.5 8.8L276.8 22.8L263.5 27Z" stroke="#3fb6ec" stroke-width="1.5"/><path d="M265.8 10.8L267 16.4L268.8 15.9" stroke="#3fb6ec"/>
<!-- warehouse -->
<path d="M301.4 6.6H320.2V37.4H301.4Z" stroke-width="1.5"/><path d="M320.2 14.4H330.6V37.4H320.2" stroke-width="1.5"/>
<g stroke-width="1.3" stroke-dasharray="2.3 1.5" stroke-linecap="butt"><path d="M305.5 10V34.5M309 10V34.5M312.5 10V34.5M316 10V34.5"/></g>
<path d="M322.5 17.8H328.2M322.5 21.1H328.2M322.5 24.4H328.2M322.5 27.7H328.2M322.5 31H328.2M322.5 34.3H328.2" stroke="#3fb6ec" stroke-width="1.4" stroke-linecap="butt"/>
<!-- sales -->
<circle cx="378.8" cy="11.2" r="2.6" stroke="#3fb6ec"/><circle cx="373.2" cy="19.5" r="3.7" stroke="#3fb6ec"/>
<path d="M356.8 30L362.5 26.8Q365 25.6 368 26.2L375 27.6Q377.3 28.4 375.8 29.9L368.5 30.6M377 29.2L385 24.9Q387.8 24.2 386.6 26.4L374.5 34.2Q372 35.6 369 35L364.2 33.6L360.8 35.6"/>
<!-- retail -->
<path d="M463.3 35.9H453Q450.2 35.9 450.2 33V12.6H470.6V14.6M456 16.5V12Q456.3 7.7 460.5 7.7Q464.7 7.7 465 12V16.5"/>
<path d="M465.8 21.5H481.6V33.5Q481.6 35.9 479.2 35.9H468.2Q465.8 35.9 465.8 33.5ZM469.6 24.4V20.5Q469.8 16.6 473.7 16.6Q477.6 16.6 477.8 20.5V24.4" stroke="#3fb6ec"/>
<!-- prices -->
<circle cx="551.2" cy="11" r="4.6"/>
<path d="M547 14.3L542.9 19V34.5Q542.9 37.2 545.6 37.2H556.8Q559.5 37.2 559.5 34.5V19L553.5 12.6"/>
<path d="M554.2 23.5Q551 21.6 548.6 23.4Q547.3 25.6 551 26.9Q555 28.2 553.8 30.6Q551.5 32.6 548 30.6M551.2 20.5V33.6" stroke="#3fb6ec" stroke-width="1.5"/>
<!-- equipment -->
<rect x="609.5" y="6.4" width="25" height="7.2" rx="1.5"/><rect x="609.5" y="13.6" width="25" height="7.4" rx="1.5"/><rect x="609.5" y="21" width="25" height="7.2" rx="1.5"/>
<path d="M621.5 10H629.5M621.5 17.3H629.5M621.5 24.6H629.5" stroke-width="1.5"/>
<g fill="#3b3b3b" stroke="none"><circle cx="615.4" cy="10" r="0.8"/><circle cx="615.4" cy="17.3" r="0.8"/><circle cx="615.4" cy="24.6" r="0.8"/></g>
<path d="M612.3 35.6H620M624 35.6H631.7M622 32V33.5" stroke="#3fb6ec"/><circle cx="610.3" cy="35.6" r="1.9" stroke="#3fb6ec"/><circle cx="622" cy="35.6" r="1.9" stroke="#3fb6ec"/><circle cx="633.7" cy="35.6" r="1.9" stroke="#3fb6ec"/>
<!-- chat -->
<path d="M699.2 10V8.6Q699.2 6.4 697 6.4H682.4Q680.2 6.4 680.2 8.6V35.2Q680.2 37.4 682.4 37.4H697Q699.2 37.4 699.2 35.2V26.5M687.2 33.2H691.8" stroke-width="1.5"/>
<path d="M690.6 12.3H703.8Q706 12.3 706 14.5V21.8Q706 24 703.8 24H696.5L692.6 27.6V24H690.6Q688.4 24 688.4 21.8V14.5Q688.4 12.3 690.6 12.3ZM692 16.8H702.4M692 20H702.4" stroke="#3fb6ec"/>
<!-- account -->
<path d="M753.8 32.6V30.5Q754 28 757 26.2L762.6 23V19.5Q760.4 17.5 760.4 12Q760.6 6.2 765.8 6.2Q771 6.2 771.2 12Q771.2 17.5 769.2 19.5V23L774.8 26.2Q778 28 778.2 30.5V32.6"/>
<path d="M762.2 32.4H770V37.2H762.2ZM763.8 32.2V30.4Q764 28 766.1 28Q768.2 28 768.4 30.4V32.2" stroke="#3fb6ec"/>
<!-- search -->
<path d="M825 10.2H845M825 18.5H835M825 26.4H835M825 34.6H845" stroke-width="1.4" stroke-linecap="butt"/>
<circle cx="844.8" cy="22.4" r="6" stroke="#3fb6ec"/><path d="M849.2 26.8L853.8 31.3" stroke="#3fb6ec"/>
</svg>
<svg style="left:8px;top:71px" width="17" height="16" viewBox="0 0 17 16" fill="none" stroke-width="1.3" stroke-linejoin="round"><path d="M1 10.3V0.8H5.3L6.8 2.7H12.5V4.5" stroke="#5bc3f0" stroke-width="1.5"/><path d="M4.6 6.5H15.3L12.6 14.2H1.7Z" stroke="#3b3b3b"/></svg>
<svg style="left:23px;top:100px" width="17" height="16" viewBox="0 0 17 16" fill="none" stroke-width="1.3" stroke-linejoin="round" stroke-linecap="round"><path d="M0.8 8.6L7.9 13.3L15.2 8.6" stroke="#3fb6ec" stroke-width="1.4"/><path d="M7.9 0.7L15 5L7.9 9.3L0.9 5Z" stroke="#2e2e2e"/></svg>
<svg style="left:23px;top:128px" width="17" height="16" viewBox="0 0 17 16" fill="none" stroke-width="1.3" stroke-linejoin="round" stroke-linecap="round"><path d="M0.8 8.6L7.9 13.3L15.2 8.6" stroke="#3fb6ec" stroke-width="1.4"/><path d="M7.9 0.7L15 5L7.9 9.3L0.9 5Z" stroke="#2e2e2e"/></svg>
<svg style="left:23px;top:156px" width="17" height="16" viewBox="0 0 17 16" fill="none" stroke-width="1.3" stroke-linejoin="round" stroke-linecap="round"><path d="M0.8 8.6L7.9 13.3L15.2 8.6" stroke="#3fb6ec" stroke-width="1.4"/><path d="M7.9 0.7L15 5L7.9 9.3L0.9 5Z" stroke="#2e2e2e"/></svg>
<svg style="left:8px;top:183px" width="17" height="16" viewBox="0 0 17 16" fill="none" stroke-width="1.3" stroke-linejoin="round"><path d="M1 10.3V0.8H5.3L6.8 2.7H12.5V4.5" stroke="#5bc3f0" stroke-width="1.5"/><path d="M4.6 6.5H15.3L12.6 14.2H1.7Z" stroke="#3b3b3b"/></svg>
<svg style="left:23px;top:212px" width="17" height="16" viewBox="0 0 17 16" fill="none" stroke-width="1.3" stroke-linejoin="round" stroke-linecap="round"><path d="M0.8 8.6L7.9 13.3L15.2 8.6" stroke="#3fb6ec" stroke-width="1.4"/><path d="M7.9 0.7L15 5L7.9 9.3L0.9 5Z" stroke="#2e2e2e"/></svg>
<svg style="left:8px;top:239px" width="17" height="16" viewBox="0 0 17 16" fill="none" stroke-width="1.3" stroke-linejoin="round"><path d="M1 10.3V0.8H5.3L6.8 2.7H12.5V4.5" stroke="#5bc3f0" stroke-width="1.5"/><path d="M4.6 6.5H15.3L12.6 14.2H1.7Z" stroke="#3b3b3b"/></svg>
<svg style="left:23px;top:268px" width="17" height="16" viewBox="0 0 17 16" fill="none" stroke-width="1.3" stroke-linejoin="round" stroke-linecap="round"><path d="M0.8 8.6L7.9 13.3L15.2 8.6" stroke="#3fb6ec" stroke-width="1.4"/><path d="M7.9 0.7L15 5L7.9 9.3L0.9 5Z" stroke="#2e2e2e"/></svg>
<svg style="left:8px;top:295px" width="17" height="16" viewBox="0 0 17 16" fill="none" stroke-width="1.3" stroke-linejoin="round"><path d="M1 10.3V0.8H5.3L6.8 2.7H12.5V4.5" stroke="#5bc3f0" stroke-width="1.5"/><path d="M4.6 6.5H15.3L12.6 14.2H1.7Z" stroke="#3b3b3b"/></svg>
<svg style="left:23px;top:324px" width="17" height="16" viewBox="0 0 17 16" fill="none" stroke-width="1.3" stroke-linejoin="round" stroke-linecap="round"><path d="M0.8 8.6L7.9 13.3L15.2 8.6" stroke="#3fb6ec" stroke-width="1.4"/><path d="M7.9 0.7L15 5L7.9 9.3L0.9 5Z" stroke="#2e2e2e"/></svg>
<svg style="left:23px;top:352px" width="17" height="16" viewBox="0 0 17 16" fill="none" stroke-width="1.3" stroke-linejoin="round" stroke-linecap="round"><path d="M0.8 8.6L7.9 13.3L15.2 8.6" stroke="#3fb6ec" stroke-width="1.4"/><path d="M7.9 0.7L15 5L7.9 9.3L0.9 5Z" stroke="#2e2e2e"/></svg>
<svg style="left:23px;top:380px" width="17" height="16" viewBox="0 0 17 16" fill="none" stroke-width="1.3" stroke-linejoin="round" stroke-linecap="round"><path d="M0.8 8.6L7.9 13.3L15.2 8.6" stroke="#3fb6ec" stroke-width="1.4"/><path d="M7.9 0.7L15 5L7.9 9.3L0.9 5Z" stroke="#2e2e2e"/></svg>
<svg style="left:23px;top:408px" width="17" height="16" viewBox="0 0 17 16" fill="none" stroke-width="1.3" stroke-linejoin="round" stroke-linecap="round"><path d="M0.8 8.6L7.9 13.3L15.2 8.6" stroke="#3fb6ec" stroke-width="1.4"/><path d="M7.9 0.7L15 5L7.9 9.3L0.9 5Z" stroke="#2e2e2e"/></svg>
<svg style="left:23px;top:436px" width="17" height="16" viewBox="0 0 17 16" fill="none" stroke-width="1.3" stroke-linejoin="round" stroke-linecap="round"><path d="M0.8 8.6L7.9 13.3L15.2 8.6" stroke="#3fb6ec" stroke-width="1.4"/><path d="M7.9 0.7L15 5L7.9 9.3L0.9 5Z" stroke="#2e2e2e"/></svg>
<svg style="left:380px;top:383px" width="190" height="24" viewBox="380 383 190 24" fill="none" stroke="#3b3b3b" stroke-width="1.2" stroke-linecap="butt" stroke-linejoin="round">
<path d="M384.5 389.6H399.6M389.2 397.6H395.2"/><path d="M386.7 393.8H397.7M390.8 401.5H393.8" stroke="#3fb6ec"/>
<path d="M406.5 385V405M435.5 385V405M488.5 385V405M541.5 385V405" stroke="#c9c9c9" stroke-width="1"/>
<path d="M413.3 397.8L416.7 400.6L424.6 389.4" stroke="#3fb6ec" stroke-width="1.3"/><path d="M426.2 391H428.8M424.6 395H428.8M422.3 399H428.8"/>
<path d="M448.2 389.8H457.3M448.2 395.5H457.3M448.2 401.2H457.3"/>
<text x="442.3" y="391.8" font-size="5.2" font-weight="700" fill="#3fb6ec" stroke="none" font-family="Liberation Sans, sans-serif">1</text><text x="442.3" y="397.4" font-size="5.2" font-weight="700" fill="#3fb6ec" stroke="none" font-family="Liberation Sans, sans-serif">2</text><text x="442.3" y="403.1" font-size="5.2" font-weight="700" fill="#3fb6ec" stroke="none" font-family="Liberation Sans, sans-serif">3</text>
<path d="M466.5 388.8H481.6M466.5 392.7H481.6M466.5 396.6H476M466.5 400.5H472.4"/><path d="M475.5 398.7H481.5M478.5 395.7V401.7" stroke="#3fb6ec"/>
<path d="M498 390.6V387.7H507.5V390.6" stroke="#3fb6ec" stroke-width="1"/>
<path d="M498.7 399H497Q495.5 399 495.5 397.5V394Q495.5 392.5 497 392.5H509Q510.5 392.5 510.5 394V397.5Q510.5 399 509 399H507.3M498.7 396.5H507.3V402H498.7Z" stroke-width="1.3"/>
<path d="M525.5 391H521.2Q519.8 391 519.8 392.4V400.6Q519.8 402 521.2 402H530Q531.4 402 531.4 400.6V396.5" stroke-width="1.3"/>
<path d="M526.3 395.6L534 388.2M529.2 388H534.2V393" stroke="#3fb6ec" stroke-width="1.3"/>
<circle cx="555.8" cy="394.6" r="2.3" stroke="#3fb6ec" stroke-width="1.3"/>
<path d="M554.5 389.5L554.6 387.4L557.0 387.4L557.1 389.5L558.6 390.1L560.1 388.7L561.8 390.4L560.4 391.9L561.0 393.4L563.1 393.5L563.1 395.9L561.0 396.0L560.4 397.5L561.8 399.0L560.1 400.7L558.6 399.3L557.1 399.9L557.0 402.0L554.6 402.0L554.5 399.9L553.0 399.3L551.5 400.7L549.8 399.0L551.2 397.5L550.6 396.0L548.5 395.9L548.5 393.5L550.6 393.4L551.2 391.9L549.8 390.4L551.5 388.7L553.0 390.1Z" stroke-width="1.15" stroke-linejoin="round"/>
</svg>
<svg style="left:380px;top:566.3px" width="190" height="24" viewBox="380 383 190 24" fill="none" stroke="#3b3b3b" stroke-width="1.2" stroke-linecap="butt" stroke-linejoin="round">
<path d="M384.5 389.6H399.6M389.2 397.6H395.2"/><path d="M386.7 393.8H397.7M390.8 401.5H393.8" stroke="#3fb6ec"/>
<path d="M406.5 385V405M435.5 385V405M488.5 385V405M541.5 385V405" stroke="#c9c9c9" stroke-width="1"/>
<path d="M413.3 397.8L416.7 400.6L424.6 389.4" stroke="#3fb6ec" stroke-width="1.3"/><path d="M426.2 391H428.8M424.6 395H428.8M422.3 399H428.8"/>
<path d="M448.2 389.8H457.3M448.2 395.5H457.3M448.2 401.2H457.3"/>
<text x="442.3" y="391.8" font-size="5.2" font-weight="700" fill="#3fb6ec" stroke="none" font-family="Liberation Sans, sans-serif">1</text><text x="442.3" y="397.4" font-size="5.2" font-weight="700" fill="#3fb6ec" stroke="none" font-family="Liberation Sans, sans-serif">2</text><text x="442.3" y="403.1" font-size="5.2" font-weight="700" fill="#3fb6ec" stroke="none" font-family="Liberation Sans, sans-serif">3</text>
<path d="M466.5 388.8H481.6M466.5 392.7H481.6M466.5 396.6H476M466.5 400.5H472.4"/><path d="M475.5 398.7H481.5M478.5 395.7V401.7" stroke="#3fb6ec"/>
<path d="M498 390.6V387.7H507.5V390.6" stroke="#3fb6ec" stroke-width="1"/>
<path d="M498.7 399H497Q495.5 399 495.5 397.5V394Q495.5 392.5 497 392.5H509Q510.5 392.5 510.5 394V397.5Q510.5 399 509 399H507.3M498.7 396.5H507.3V402H498.7Z" stroke-width="1.3"/>
<path d="M525.5 391H521.2Q519.8 391 519.8 392.4V400.6Q519.8 402 521.2 402H530Q531.4 402 531.4 400.6V396.5" stroke-width="1.3"/>
<path d="M526.3 395.6L534 388.2M529.2 388H534.2V393" stroke="#3fb6ec" stroke-width="1.3"/>
<circle cx="555.8" cy="394.6" r="2.3" stroke="#3fb6ec" stroke-width="1.3"/>
<path d="M554.5 389.5L554.6 387.4L557.0 387.4L557.1 389.5L558.6 390.1L560.1 388.7L561.8 390.4L560.4 391.9L561.0 393.4L563.1 393.5L563.1 395.9L561.0 396.0L560.4 397.5L561.8 399.0L560.1 400.7L558.6 399.3L557.1 399.9L557.0 402.0L554.6 402.0L554.5 399.9L553.0 399.3L551.5 400.7L549.8 399.0L551.2 397.5L550.6 396.0L548.5 395.9L548.5 393.5L550.6 393.4L551.2 391.9L549.8 390.4L551.5 388.7L553.0 390.1Z" stroke-width="1.15" stroke-linejoin="round"/>
</svg>
<svg style="left:170px;top:568px" width="75" height="22" viewBox="170 568 75 22" fill="none" stroke="#3b3b3b" stroke-width="1.2" stroke-linecap="butt" stroke-linejoin="round">
<path d="M172.2 573.6H187.5M176.2 581.6H183.7"/><path d="M174 577.6H185.7M178.2 585.7H181.9" stroke="#3fb6ec"/>
<path d="M194.5 569.5V589" stroke="#c9c9c9" stroke-width="1"/>
<path d="M205.2 572.1H213" stroke="#8fd6f5" stroke-width="1.8"/>
<rect x="202.9" y="573.8" width="12" height="12.3" rx="1.8" stroke="#707070" stroke-width="1.3"/>
<path d="M206 580H211.8M208.9 577.1V582.9" stroke="#3fb6ec" stroke-width="1.5"/>
<path d="M227.5 573.5H238.7V584.4M230.4 571.4H240.7V581.8" stroke="#3fb6ec" stroke-width="1.1"/>
<rect x="225.9" y="575.9" width="10.5" height="10.2" rx="0.8" stroke-width="1.4" fill="#fff"/>
<path d="M228.2 580.8H234M231.1 577.9V583.7" stroke="#3fb6ec" stroke-width="1.1"/>
</svg>
<svg style="left:1040px;top:560px" width="325" height="61" viewBox="1040 560 325 61" fill="none" stroke="#3b3b3b" stroke-width="1.2" stroke-linecap="round" stroke-linejoin="round">
<!-- pencil -->
<path d="M1132.6 581.4L1133.6 577.6L1139.6 571.4Q1140.6 570.6 1141.6 571.5Q1142.5 572.5 1141.7 573.5L1135.8 580.2Z" stroke="#2a2a2a" stroke-width="1.3"/><path d="M1138.3 572.8L1140.4 574.9" stroke="#2a2a2a" stroke-width="1"/><path d="M1131.2 583.2H1142.4" stroke="#3fb6ec" stroke-linecap="butt" stroke-width="1.3"/>
<!-- printer -->
<path d="M1245.4 576V570.4H1253.4V576Z" fill="#f1f1f1" stroke="#b5b5b5" stroke-width="0.9"/>
<path d="M1243.2 575.6H1255.4Q1257 575.6 1257 577.4V582.6Q1257 583.6 1256 583.6H1242.4Q1241.4 583.6 1241.4 582.6V577.4Q1241.4 575.6 1243.2 575.6Z" fill="#cfcfcf" stroke="#a2a2a2" stroke-width="0.9"/>
<path d="M1244 581.7H1254.6" stroke="#3c3c3c" stroke-width="1.3" stroke-linecap="butt"/>
<path d="M1244.4 582.6H1254.2V585.2H1244.4Z" fill="#fafafa" stroke="#b5b5b5" stroke-width="0.8"/>
<!-- refresh -->
<path d="M1053.2 604.5Q1054.5 600.3 1058.6 600.3Q1060.8 600.5 1062 602" stroke-width="1.5"/><path d="M1060 603L1063 603.2L1063.2 599.8Z" fill="#3b3b3b" stroke-width="0.6"/>
<path d="M1063 607.5Q1061.7 611.7 1057.6 611.7Q1055.4 611.5 1054.2 610" stroke="#3fb6ec" stroke-width="1.5"/><path d="M1056.2 609L1053.2 608.8L1053 612.2Z" fill="#3fb6ec" stroke="#3fb6ec" stroke-width="0.6"/>
<!-- save -->
<path d="M1078 606.8H1088.6V610.6H1078Z" fill="#c4c4c4" stroke="none"/>
<path d="M1079.2 601.4H1086.3L1089 604.1V610.9Q1089 612.5 1087.4 612.5H1079.2Q1077.6 612.5 1077.6 610.9V603Q1077.6 601.4 1079.2 601.4Z" stroke-width="1.4"/>
<!-- trash -->
<path d="M1166.4 603.8H1177.4M1170 603.6V601.6H1173.8V603.6" stroke="#9a9a9a" stroke-width="1.1"/>
<path d="M1168.2 604.5V611.2Q1168.2 612.6 1169.6 612.6H1174.2Q1175.6 612.6 1175.6 611.2V604.5" stroke-width="1.4"/>
<!-- ok check -->
<path d="M1250 607.6L1253.4 611L1262.2 602.6" stroke-width="1.4"/>
<!-- close X -->
<path d="M1298.3 602.3L1307.8 611.6M1307.8 602.3L1298.3 611.6" stroke-width="1.4"/>
</svg>
</body></html>
